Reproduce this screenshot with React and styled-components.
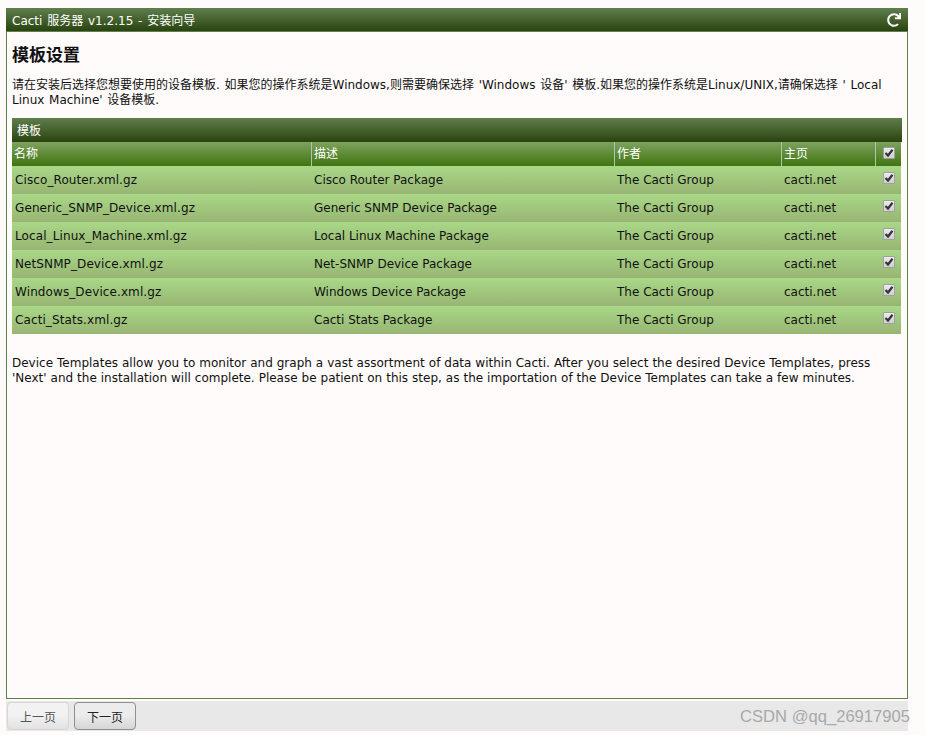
import React from 'react';
import styled, { createGlobalStyle } from 'styled-components';
import { FaRedo } from 'react-icons/fa';

const GlobalStyle = createGlobalStyle`
  html, body {
    margin: 0;
    padding: 0;
    background: #fefbfa;
  }
  body {
    font-family: "DejaVu Sans", "Noto Sans CJK SC", sans-serif;
    font-size: 12px;
    color: #111;
  }
`;

const Page = styled.div`
  position: relative;
  width: 925px;
  height: 735px;
  padding: 8px 17px 0 6px;
  box-sizing: border-box;
  overflow: hidden;
`;

const Panel = styled.div`
  height: 691px;
  box-sizing: border-box;
  border: 1px solid #5f7f4c;
  border-top: 0;
  display: flex;
  flex-direction: column;
`;

const TitleBar = styled.div`
  height: 24px;
  margin: 0 -1px;
  padding: 0 7px 0 6px;
  flex: none;
  display: flex;
  align-items: center;
  justify-content: space-between;
  color: #fff;
  font-size: 12px;
  word-spacing: 1px;
  background: linear-gradient(#5f7f4c, #2a4310);
  border-bottom: 1px solid #5f7f4c;
  box-sizing: border-box;
`;

const Content = styled.div`
  padding: 0 5px;
`;

const Heading = styled.h2`
  margin: 12px 0 0;
  height: 22px;
  font-size: 17px;
  line-height: 22px;
  font-weight: bold;
  color: #111;
`;

const Paragraph = styled.p`
  margin: ${props => props.$top}px 0 0;
  font-size: 12px;
  line-height: 15px;
  word-spacing: ${props => props.$spread}px;
  color: #111;
`;

const TemplateTable = styled.div`
  margin: 10px 0 0;
  width: 890px;
`;

const TableTitle = styled.div`
  height: 24px;
  padding: 0 0 2px 5px;
  box-sizing: border-box;
  display: flex;
  align-items: center;
  color: #fff;
  font-size: 12px;
  background: linear-gradient(#5f7f4c, #2a4310);
`;

const columns = '300px 303px 167px 94px 25px';

const HeaderRow = styled.div`
  display: grid;
  grid-template-columns: ${columns};
  width: 889px;
  height: 24px;
  background: linear-gradient(#7ea35f, #3f7410);
`;

const HeaderCell = styled.div`
  padding: 0 0 ${props => (props.$center ? 0 : 3)}px ${props => (props.$center ? 0 : 2)}px;
  display: flex;
  align-items: center;
  color: #fff;
  font-size: 12px;
  box-sizing: border-box;
  border-right: ${props => (props.$last ? 0 : '1px solid #b4c4a6')};
  justify-content: ${props => (props.$center ? 'center' : 'flex-start')};
`;

const Row = styled.div`
  display: grid;
  grid-template-columns: ${columns};
  width: 889px;
  height: 28px;
  background: linear-gradient(#a9d887, #98b573);
`;

const Cell = styled.div`
  padding-left: 2px;
  display: flex;
  align-items: center;
  font-size: 12px;
  color: #111;
  justify-content: ${props => (props.$center ? 'center' : 'flex-start')};
`;

const FileCell = styled(Cell)`
  padding-left: 3px;
  letter-spacing: 0.1px;
`;

const CheckCell = styled(Cell)`
  padding-left: 0;
`;

const CheckBox = styled.span`
  width: 12px;
  height: 12px;
  box-sizing: border-box;
  display: flex;
  align-items: center;
  justify-content: center;
  background: linear-gradient(#ececec, #cfcfcf);
  border: 1px solid #a0a0a0;
  border-radius: 1px;
  margin-top: ${props => props.$up}px;
`;

const Footer = styled.div`
  width: 902px;
  height: 30px;
  margin-top: 2px;
  padding: 1px 0 0 1px;
  box-sizing: border-box;
  display: flex;
  align-items: flex-start;
  gap: 5px;
  background: #e8e8e8;
`;

const NavButton = styled.button`
  width: 62px;
  height: 28px;
  padding: 0;
  box-sizing: border-box;
  border-radius: 4px;
  border: 1px solid ${props => (props.$active ? '#8f8f8f' : '#d6d6d6')};
  background: ${props => (props.$active
    ? 'linear-gradient(#ececec 45%, #d6d6d6)'
    : 'linear-gradient(#f2f2f2 45%, #e2e2e2)')};
  color: ${props => (props.$active ? '#222' : '#555')};
  font-family: "Noto Sans CJK SC", sans-serif;
  font-size: 12px;
`;

const Watermark = styled.div`
  position: absolute;
  left: 740px;
  top: 708px;
  font-family: "Liberation Sans", sans-serif;
  font-size: 16.6px;
  line-height: 18px;
  color: #a9a9a9;
  white-space: nowrap;
`;

const templates = [
  ['Cisco_Router.xml.gz', 'Cisco Router Package'],
  ['Generic_SNMP_Device.xml.gz', 'Generic SNMP Device Package'],
  ['Local_Linux_Machine.xml.gz', 'Local Linux Machine Package'],
  ['NetSNMP_Device.xml.gz', 'Net-SNMP Device Package'],
  ['Windows_Device.xml.gz', 'Windows Device Package'],
  ['Cacti_Stats.xml.gz', 'Cacti Stats Package'],
];

const Check = ({ up = 0 }) => (
  <CheckBox $up={up}>
    <svg width="10" height="10" viewBox="0 0 10 10">
      <path d="M1.5 5 L4 7.5 L8.5 1.8" fill="none" stroke="#333" strokeWidth="2.2" />
    </svg>
  </CheckBox>
);

const App = () => (
  <Page>
    <GlobalStyle />
    <Panel>
      <TitleBar>
        <span>Cacti 服务器 v1.2.15 - 安装向导</span>
        <FaRedo size={14} color="#fff" />
      </TitleBar>
      <Content>
        <Heading>模板设置</Heading>
        <Paragraph $top={12} $spread={0.9}>
          请在安装后选择您想要使用的设备模板. 如果您的操作系统是Windows,则需要确保选择 'Windows 设备' 模板.如果您的操作系统是Linux/UNIX,请确保选择 ' Local Linux Machine' 设备模板.
        </Paragraph>
        <TemplateTable>
          <TableTitle>模板</TableTitle>
          <HeaderRow>
            <HeaderCell>名称</HeaderCell>
            <HeaderCell>描述</HeaderCell>
            <HeaderCell>作者</HeaderCell>
            <HeaderCell>主页</HeaderCell>
            <HeaderCell $last $center><Check up={-2} /></HeaderCell>
          </HeaderRow>
          {templates.map(([file, description]) => (
            <Row key={file}>
              <FileCell>{file}</FileCell>
              <Cell>{description}</Cell>
              <Cell>The Cacti Group</Cell>
              <Cell>cacti.net</Cell>
              <CheckCell $center><Check up={-4} /></CheckCell>
            </Row>
          ))}
        </TemplateTable>
        <Paragraph $top={22} $spread={0.17}>
          Device Templates allow you to monitor and graph a vast assortment of data within Cacti. After you select the desired Device Templates, press 'Next' and the installation will complete. Please be patient on this step, as the importation of the Device Templates can take a few minutes.
        </Paragraph>
      </Content>
    </Panel>
    <Footer>
      <NavButton>上一页</NavButton>
      <NavButton $active>下一页</NavButton>
    </Footer>
    <Watermark>CSDN @qq_26917905</Watermark>
  </Page>
);

export default App;
